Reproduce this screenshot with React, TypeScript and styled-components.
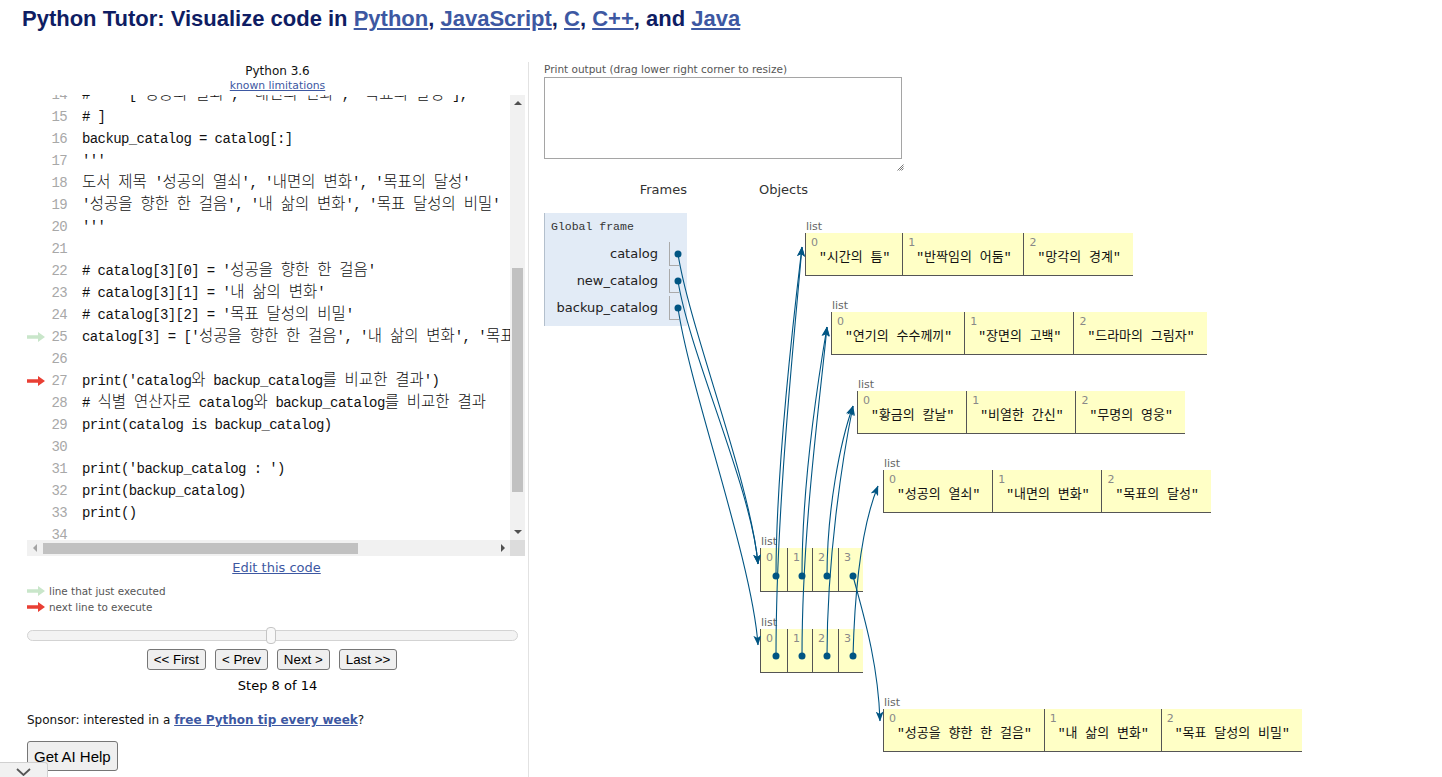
import React from 'react';
import styled, { createGlobalStyle } from 'styled-components';

const LINK = '#3d58a2';
const POINTER = '#005583';
const MONO = `'Liberation Mono', 'Noto Sans CJK KR', monospace`;
const SANS = `'DejaVu Sans', 'Noto Sans CJK KR', sans-serif`;

const GlobalStyle = createGlobalStyle`
    html, body {
        margin: 0;
        padding: 0;
        height: 777px;
        overflow: hidden;
        background: #fff;
    }
    body {
        font-family: ${SANS};
        color: #000;
    }
`;

const Page = styled.div`
    position: relative;
    height: 777px;
`;

const Title = styled.h1`
    margin: 0;
    padding: 6px 0 0 22px;
    font-family: 'Liberation Sans', sans-serif;
    font-weight: bold;
    font-size: 22px;
    line-height: 26px;
    color: #0f1d63;
    white-space: nowrap;
`;

const TitleLink = styled.a`
    color: ${LINK};
    text-decoration: underline;
`;

const Main = styled.div`
    display: flex;
    margin-top: 30px;
`;

/* ---------- left: code ---------- */

const LeftPane = styled.div`
    width: 501px;
    padding-left: 27px;
    border-right: 1px solid #e2e2e2;
    display: flex;
    flex-direction: column;
    height: 715px;
`;

const VersionLabel = styled.div`
    padding-top: 1px;
    text-align: center;
    font-size: 12px;
    line-height: 16px;
    color: #111;
`;

const SmallLink = styled.a`
    align-self: center;
    font-size: 10.8px;
    line-height: 13px;
    color: ${LINK};
    text-decoration: underline;
`;

const CodePanel = styled.div`
    margin-top: 3px;
    width: 498px;
    display: grid;
    grid-template-columns: 483px 15px;
    grid-template-rows: 445px 16px;
`;

const CodeViewport = styled.div`
    overflow: hidden;
    background: #fff;
`;

const CodeLines = styled.div`
    margin-top: -11px;
`;

const CodeLine = styled.div`
    display: flex;
    height: 22px;
    line-height: 22px;
    white-space: pre;
    font-family: ${MONO};
    font-size: 14px;
    letter-spacing: -0.6px;
`;

const Hangul = styled.span`
    font-family: 'Noto Sans CJK KR', sans-serif;
    font-size: 15.5px;
    line-height: 0;
    letter-spacing: 0;
    font-weight: 300;
`;

const Gutter = styled.div`
    width: 18px;
    flex: none;
    display: flex;
    align-items: center;
`;

const LineNo = styled.div`
    width: 22px;
    flex: none;
    text-align: right;
    color: #a8a8a8;
`;

const LineText = styled.div`
    margin-left: 15px;
    color: #111;
`;

const VScroll = styled.div`
    background: #f1f1f1;
    display: flex;
    flex-direction: column;
    align-items: center;
`;

const HScroll = styled.div`
    background: #f1f1f1;
    display: flex;
    align-items: center;
`;

const ScrollCorner = styled.div`
    background: #dcdcdc;
`;

const ArrowBox = styled.div`
    flex: none;
    width: 15px;
    height: 16px;
    display: flex;
    align-items: center;
    justify-content: center;
`;

const Triangle = styled.div<{ $dir: 'up' | 'down' | 'left' | 'right'; $dim?: boolean }>`
    width: 0;
    height: 0;
    border: 4px solid transparent;
    ${p => {
        const c = p.$dim ? '#a3a3a3' : '#505050';
        switch (p.$dir) {
            case 'up':
                return `border-top: 0; border-bottom: 4px solid ${c};`;
            case 'down':
                return `border-bottom: 0; border-top: 4px solid ${c};`;
            case 'left':
                return `border-left: 0; border-right: 4px solid ${c};`;
            default:
                return `border-right: 0; border-left: 4px solid ${c};`;
        }
    }}
`;

const VThumb = styled.div<{ $offset: number; $size: number }>`
    width: 11px;
    margin-top: ${p => p.$offset}px;
    height: ${p => p.$size}px;
    background: #c1c1c1;
`;

const HThumb = styled.div<{ $offset: number; $size: number }>`
    height: 11px;
    margin-left: ${p => p.$offset}px;
    width: ${p => p.$size}px;
    background: #c1c1c1;
`;

const Spacer = styled.div`
    flex: 1;
`;

const EditLink = styled.a`
    align-self: center;
    margin-top: 4px;
    font-size: 13px;
    line-height: 16px;
    color: ${LINK};
    text-decoration: underline;
    margin-right: 2px;
`;

const Legend = styled.div`
    margin-top: 7px;
    display: flex;
    flex-direction: column;
`;

const LegendRow = styled.div`
    display: flex;
    align-items: center;
    gap: 4px;
    height: 16px;
    font-size: 10.4px;
    color: #555;
`;

const Slider = styled.div`
    position: relative;
    margin-top: 15px;
    width: 491px;
    height: 11px;
    box-sizing: border-box;
    border: 1px solid #d3d3d3;
    border-radius: 6px;
    background: #f3f3f3;
`;

const SliderThumb = styled.div<{ $left: number }>`
    position: absolute;
    top: -4px;
    left: ${p => p.$left}px;
    width: 10px;
    height: 17px;
    box-sizing: border-box;
    border: 1px solid #c5c5c5;
    border-radius: 4px;
    background: #f8f8f8;
`;

const NavButtons = styled.div`
    margin-top: 8px;
    display: flex;
    justify-content: center;
    gap: 9px;
    padding-right: 11px;
`;

const NavButton = styled.button`
    height: 21px;
    padding: 0 6px;
    font-family: 'Liberation Sans', sans-serif;
    font-size: 13.33px;
    color: #000;
    background: #efefef;
    border: 1px solid #767676;
    border-radius: 3px;
`;

const StepLabel = styled.div`
    margin-top: 8px;
    text-align: center;
    font-size: 13px;
    line-height: 16px;
`;

const Sponsor = styled.div`
    margin-top: 18px;
    font-size: 12px;
    line-height: 16px;
    color: #111;
`;

const SponsorLink = styled.a`
    font-weight: bold;
    color: ${LINK};
    text-decoration: underline;
`;

const AiButton = styled.button`
    align-self: flex-start;
    margin-top: 13px;
    height: 30px;
    padding: 0 6px;
    font-family: 'Liberation Sans', sans-serif;
    font-size: 15px;
    color: #000;
    background: #efefef;
    border: 1px solid #767676;
    border-radius: 3px;
`;

const CollapseTab = styled.div`
    position: fixed;
    left: 0;
    bottom: 0;
    width: 48px;
    height: 15px;
    box-sizing: border-box;
    background: #f1f1f1;
    border-top: 1px solid #d0d0d0;
    border-right: 1px solid #d0d0d0;
    border-top-right-radius: 3px;
    display: flex;
    justify-content: center;
    padding-top: 5px;
`;

/* ---------- right: output + visualisation ---------- */

const RightPane = styled.div`
    padding-left: 15px;
    display: flex;
    flex-direction: column;
`;

const OutputLabel = styled.div`
    font-size: 10.5px;
    line-height: 14px;
    color: #555;
`;

const OutputBox = styled.div`
    margin-top: 1px;
    width: 358px;
    height: 82px;
    box-sizing: border-box;
    border: 1px solid #a5a5a5;
`;

const GripRow = styled.div`
    width: 360px;
    height: 12px;
    display: flex;
    justify-content: flex-end;
    align-items: flex-end;
`;

const Viz = styled.div`
    position: relative;
    margin-top: 9px;
    width: 890px;
    height: 600px;
`;

const VizHeaders = styled.div`
    display: flex;
    height: 20px;
    line-height: 20px;
    font-size: 13px;
    color: #333;
`;

const FramesHeader = styled.div`
    width: 143px;
    text-align: right;
`;

const ObjectsHeader = styled.div`
    padding-left: 72px;
`;

const GlobalFrame = styled.div`
    margin-top: 13px;
    width: 143px;
    box-sizing: border-box;
    padding: 6px 8px 6px 6px;
    background: #e2ebf6;
    border-left: 1px solid #b3bfcc;
`;

const FrameTitle = styled.div`
    font-family: ${MONO};
    font-size: 11.5px;
    line-height: 16px;
    color: #333;
`;

const FrameVars = styled.div`
    margin-top: 7px;
    display: flex;
    flex-direction: column;
    gap: 3px;
`;

const VarRow = styled.div`
    display: flex;
    height: 24px;
`;

const VarName = styled.div`
    flex: 1;
    text-align: right;
    padding-right: 11px;
    line-height: 24px;
    font-size: 13px;
    color: #222;
`;

const VarCell = styled.div`
    width: 10px;
    box-sizing: border-box;
    border-left: 1px solid #aaa;
    border-bottom: 1px solid #aaa;
`;

const HeapNode = styled.div<{ $x: number; $y: number }>`
    position: absolute;
    left: ${p => p.$x}px;
    top: ${p => p.$y}px;
`;

const TypeLabel = styled.div`
    font-size: 11px;
    line-height: 13px;
    color: #666;
    padding-left: 1px;
`;

const ListRow = styled.div`
    display: flex;
`;

const ListCell = styled.div<{ $w?: number }>`
    ${p => (p.$w ? `width: ${p.$w}px;` : '')}
    height: ${p => (p.$w ? 44 : 43)}px;
    box-sizing: border-box;
    padding: 3px 0 0 5px;
    background: #ffffc6;
    border-left: 1px solid #555;
    border-bottom: 1px solid #555;
    display: flex;
    flex-direction: column;
`;

const CellIndex = styled.div`
    font-size: 11px;
    line-height: 13px;
    color: #888;
`;

const CellValue = styled.div`
    padding: 0 12px 0 8px;
    font-family: ${MONO};
    font-size: 13px;
    line-height: 18px;
    white-space: pre;
    color: #111;
`;

const ArrowLayer = styled.svg`
    position: absolute;
    left: 0;
    top: 0;
    width: 890px;
    height: 600px;
    overflow: visible;
    pointer-events: none;
`;

/* ---------- data ---------- */

const codeLines: { n: number; text: string; marker?: 'done' | 'next' }[] = [
    { n: 14, text: "#     ['성공의 열쇠', '내면의 변화', '목표의 달성']," },
    { n: 15, text: '# ]' },
    { n: 16, text: 'backup_catalog = catalog[:]' },
    { n: 17, text: "'''" },
    { n: 18, text: "도서 제목 '성공의 열쇠', '내면의 변화', '목표의 달성'" },
    { n: 19, text: "'성공을 향한 한 걸음', '내 삶의 변화', '목표 달성의 비밀'" },
    { n: 20, text: "'''" },
    { n: 21, text: '' },
    { n: 22, text: "# catalog[3][0] = '성공을 향한 한 걸음'" },
    { n: 23, text: "# catalog[3][1] = '내 삶의 변화'" },
    { n: 24, text: "# catalog[3][2] = '목표 달성의 비밀'" },
    { n: 25, text: "catalog[3] = ['성공을 향한 한 걸음', '내 삶의 변화', '목표 달성의 비밀']", marker: 'done' },
    { n: 26, text: '' },
    { n: 27, text: "print('catalog와 backup_catalog를 비교한 결과')", marker: 'next' },
    { n: 28, text: '# 식별 연산자로 catalog와 backup_catalog를 비교한 결과' },
    { n: 29, text: 'print(catalog is backup_catalog)' },
    { n: 30, text: '' },
    { n: 31, text: "print('backup_catalog : ')" },
    { n: 32, text: 'print(backup_catalog)' },
    { n: 33, text: 'print()' },
    { n: 34, text: '' }
];

// 한글은 전각 폭으로 보이도록 따로 감싼다
const HANGUL = /([\uac00-\ud7a3]+)/;
const renderCode = (text: string) =>
    text.split(HANGUL).map((part, i) => (HANGUL.test(part) ? <Hangul key={i}>{part}</Hangul> : part));

const frameVars = ['catalog', 'new_catalog', 'backup_catalog'];

const stringLists = [
    { x: 261, y: 40, items: ['시간의 틈', '반짝임의 어둠', '망각의 경계'] },
    { x: 287, y: 119, items: ['연기의 수수께끼', '장면의 고백', '드라마의 그림자'] },
    { x: 313, y: 198, items: ['황금의 칼날', '비열한 간신', '무명의 영웅'] },
    { x: 339, y: 277, items: ['성공의 열쇠', '내면의 변화', '목표의 달성'] },
    { x: 339, y: 516, items: ['성공을 향한 한 걸음', '내 삶의 변화', '목표 달성의 비밀'] }
];

const pointerLists = [
    { x: 216, y: 355 },
    { x: 216, y: 436 }
];
const pointerCellWidths = [27, 25, 26, 25];

// pointer origins, in Viz coordinates
const dots: [number, number][] = [
    [134, 74],
    [134, 101],
    [134, 128],
    [232, 396],
    [258, 396],
    [283, 396],
    [309, 396],
    [232, 476],
    [258, 476],
    [283, 476],
    [309, 476]
];

const connectors = [
    'M134,74 C146,150 206,300 214,384',
    'M134,101 C146,175 208,310 214,384',
    'M134,128 C146,210 208,380 214,465',
    'M232,396 C232,300 248,150 258,67',
    'M232,476 C232,330 250,160 258,67',
    'M258,396 C258,300 274,200 283,147',
    'M258,476 C258,350 276,220 283,147',
    'M283,396 C283,330 296,262 309,226',
    'M283,476 C283,380 298,280 309,226',
    'M309,396 C318,430 334,480 336,541',
    'M309,476 C311,400 320,340 334,306'
];

const ExecArrow = ({ color }: { color: string }) => (
    <svg width="18" height="10" viewBox="0 0 18 10">
        <path d="M0,3.2 H11 V0 L18,5 L11,10 V6.8 H0 Z" fill={color} />
    </svg>
);

const ARROW_DONE = '#c9e6ca';
const ARROW_NEXT = '#e93f34';

const App = () => {
    return (
        <Page>
            <GlobalStyle />
            <Title>
                Python Tutor: Visualize code in <TitleLink>Python</TitleLink>, <TitleLink>JavaScript</TitleLink>,{' '}
                <TitleLink>C</TitleLink>, <TitleLink>C++</TitleLink>, and <TitleLink>Java</TitleLink>
            </Title>
            <Main>
                <LeftPane>
                    <VersionLabel>Python 3.6</VersionLabel>
                    <SmallLink>known limitations</SmallLink>
                    <CodePanel>
                        <CodeViewport>
                            <CodeLines>
                                {codeLines.map(line => (
                                    <CodeLine key={line.n}>
                                        <Gutter>
                                            {line.marker && (
                                                <ExecArrow color={line.marker === 'done' ? ARROW_DONE : ARROW_NEXT} />
                                            )}
                                        </Gutter>
                                        <LineNo>{line.n}</LineNo>
                                        <LineText>{renderCode(line.text)}</LineText>
                                    </CodeLine>
                                ))}
                            </CodeLines>
                        </CodeViewport>
                        <VScroll>
                            <ArrowBox>
                                <Triangle $dir="up" />
                            </ArrowBox>
                            <VThumb $offset={157} $size={224} />
                            <Spacer />
                            <ArrowBox>
                                <Triangle $dir="down" />
                            </ArrowBox>
                        </VScroll>
                        <HScroll>
                            <ArrowBox>
                                <Triangle $dir="left" $dim />
                            </ArrowBox>
                            <HThumb $offset={1} $size={315} />
                            <Spacer />
                            <ArrowBox>
                                <Triangle $dir="right" />
                            </ArrowBox>
                        </HScroll>
                        <ScrollCorner />
                    </CodePanel>
                    <EditLink>Edit this code</EditLink>
                    <Legend>
                        <LegendRow>
                            <ExecArrow color={ARROW_DONE} />
                            line that just executed
                        </LegendRow>
                        <LegendRow>
                            <ExecArrow color={ARROW_NEXT} />
                            next line to execute
                        </LegendRow>
                    </Legend>
                    <Slider>
                        <SliderThumb $left={238} />
                    </Slider>
                    <NavButtons>
                        <NavButton>&lt;&lt; First</NavButton>
                        <NavButton>&lt; Prev</NavButton>
                        <NavButton>Next &gt;</NavButton>
                        <NavButton>Last &gt;&gt;</NavButton>
                    </NavButtons>
                    <StepLabel>Step 8 of 14</StepLabel>
                    <Sponsor>
                        Sponsor: interested in a <SponsorLink>free Python tip every week</SponsorLink>?
                    </Sponsor>
                    <AiButton>Get AI Help</AiButton>
                </LeftPane>
                <RightPane>
                    <OutputLabel>Print output (drag lower right corner to resize)</OutputLabel>
                    <OutputBox />
                    <GripRow>
                        <svg width="7" height="7" viewBox="0 0 7 7">
                            <path d="M0.5,6.5 L6.5,0.5 M2.5,6.5 L6.5,2.5 M4.5,6.5 L6.5,4.5" stroke="#777" strokeWidth="1" />
                        </svg>
                    </GripRow>
                    <Viz>
                        <VizHeaders>
                            <FramesHeader>Frames</FramesHeader>
                            <ObjectsHeader>Objects</ObjectsHeader>
                        </VizHeaders>
                        <GlobalFrame>
                            <FrameTitle>Global frame</FrameTitle>
                            <FrameVars>
                                {frameVars.map(name => (
                                    <VarRow key={name}>
                                        <VarName>{name}</VarName>
                                        <VarCell />
                                    </VarRow>
                                ))}
                            </FrameVars>
                        </GlobalFrame>
                        {stringLists.map((list, i) => (
                            <HeapNode key={`s${i}`} $x={list.x} $y={list.y}>
                                <TypeLabel>list</TypeLabel>
                                <ListRow>
                                    {list.items.map((item, idx) => (
                                        <ListCell key={item}>
                                            <CellIndex>{idx}</CellIndex>
                                            <CellValue>"{item}"</CellValue>
                                        </ListCell>
                                    ))}
                                </ListRow>
                            </HeapNode>
                        ))}
                        {pointerLists.map((list, i) => (
                            <HeapNode key={`p${i}`} $x={list.x} $y={list.y}>
                                <TypeLabel>list</TypeLabel>
                                <ListRow>
                                    {pointerCellWidths.map((w, idx) => (
                                        <ListCell key={idx} $w={w}>
                                            <CellIndex>{idx}</CellIndex>
                                        </ListCell>
                                    ))}
                                </ListRow>
                            </HeapNode>
                        ))}
                        <ArrowLayer viewBox="0 0 890 600">
                            <defs>
                                <marker
                                    id="head"
                                    viewBox="0 0 10 8"
                                    refX="9.5"
                                    refY="4"
                                    markerWidth="10"
                                    markerHeight="8"
                                    markerUnits="userSpaceOnUse"
                                    orient="auto"
                                >
                                    <path d="M0,0 L10,4 L0,8 L2.5,4 Z" fill={POINTER} />
                                </marker>
                            </defs>
                            {connectors.map(d => (
                                <path key={d} d={d} fill="none" stroke={POINTER} strokeWidth="1.1" markerEnd="url(#head)" />
                            ))}
                            {dots.map(([x, y]) => (
                                <circle key={`${x}-${y}`} cx={x} cy={y} r="3.5" fill={POINTER} />
                            ))}
                        </ArrowLayer>
                    </Viz>
                </RightPane>
            </Main>
            <CollapseTab>
                <svg width="15" height="8" viewBox="0 0 15 8">
                    <path d="M1,1 L7.5,7 L14,1" fill="none" stroke="#555" strokeWidth="1.8" />
                </svg>
            </CollapseTab>
        </Page>
    );
};

export default App;
